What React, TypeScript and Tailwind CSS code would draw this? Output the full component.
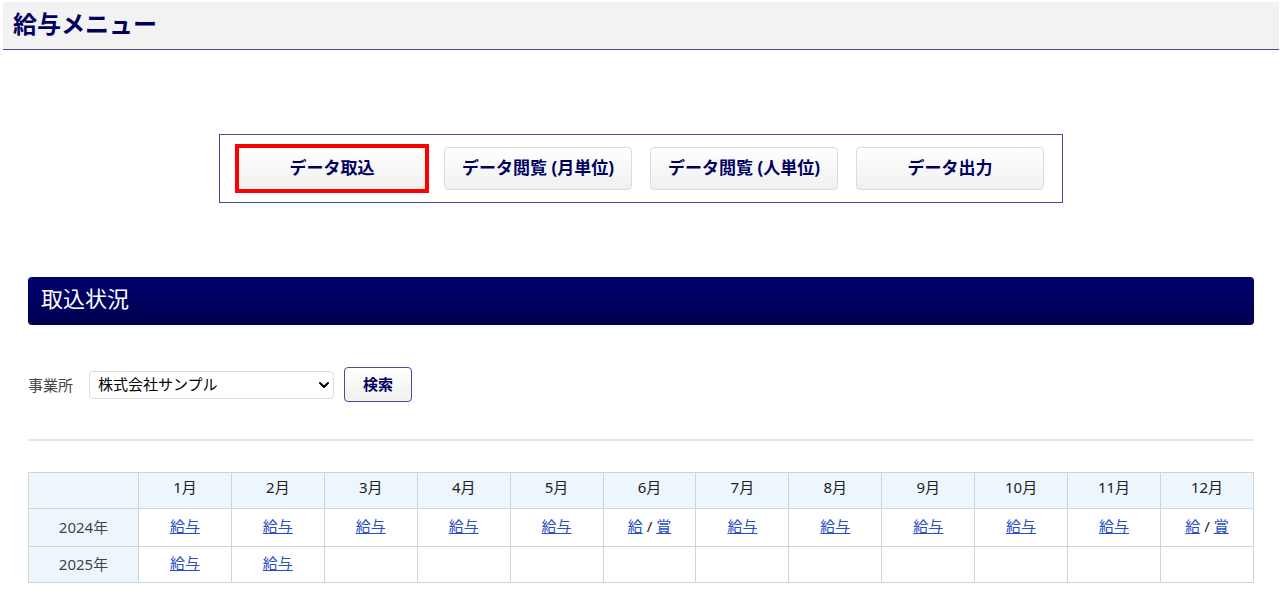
import React, { useState } from 'react';
import { ChevronDown } from 'lucide-react';

interface PayrollYear {
  year: number;
  months: string[][];
}

const menuItems = ['データ取込', 'データ閲覧 (月単位)', 'データ閲覧 (人単位)', 'データ出力'];

const monthLabels = Array.from({ length: 12 }, (_, i) => `${i + 1}月`);

const years: PayrollYear[] = [
  {
    year: 2024,
    months: [
      ['給与'], ['給与'], ['給与'], ['給与'], ['給与'], ['給', '賞'],
      ['給与'], ['給与'], ['給与'], ['給与'], ['給与'], ['給', '賞'],
    ],
  },
  {
    year: 2025,
    months: [['給与'], ['給与'], [], [], [], [], [], [], [], [], [], []],
  },
];

const MainMenu: React.FC = () => {
  const [active, setActive] = useState(0);

  return (
    <nav className="flex w-fit mx-auto mt-[84px] gap-[18px] border border-[#4b4b99] px-[18px] py-3">
      {menuItems.map((label, i) => (
        <button
          key={label}
          type="button"
          onClick={() => setActive(i)}
          className="relative w-[188px] h-[43px] pb-0.5 rounded border border-[#dcdcdc] bg-linear-to-b from-white to-[#f0f0f0] text-[17px] leading-6 font-bold text-[#00005f] whitespace-nowrap"
        >
          {label}
          {active === i && (
            <span className="absolute -inset-1 border-4 border-[#ff0000] pointer-events-none" />
          )}
        </button>
      ))}
    </nav>
  );
};

const SearchForm: React.FC = () => (
  <form className="flex items-center mt-[42px]" onSubmit={(e) => e.preventDefault()}>
    <label htmlFor="office" className="w-[61px] text-[#444444]">事業所</label>
    <div className="relative">
      <select
        id="office"
        className="block appearance-none w-[245px] h-7 pl-2 pr-6 pb-0.5 rounded border border-[#dcdcdc] bg-white text-black leading-5"
      >
        <option>株式会社サンプル</option>
      </select>
      <ChevronDown
        className="absolute right-0.5 top-1.5 w-4 h-4 text-black pointer-events-none"
        strokeWidth={3}
      />
    </div>
    <button
      type="submit"
      className="w-[68px] h-[35px] ml-[10px] pb-0.5 rounded border border-[#4b4b99] bg-linear-to-b from-white to-[#f0f0f0] font-bold text-[#00005f]"
    >
      検索
    </button>
  </form>
);

const StatusTable: React.FC = () => (
  <table className="w-full mt-[31px] table-fixed border-collapse text-center text-[#222222]">
    <thead>
      <tr className="h-9 bg-[#edf6fd]">
        <td className="w-[110px] border border-[#d3d3d3]" />
        {monthLabels.map((label) => (
          <th key={label} scope="col" className="border border-[#d3d3d3] pb-2 font-normal">
            {label}
          </th>
        ))}
      </tr>
    </thead>
    <tbody>
      {years.map((row) => (
        <tr key={row.year} className="h-[38px] last:h-9">
          <th scope="row" className="border border-[#d3d3d3] bg-[#edf6fd] pb-0.5 font-normal text-[#444444]">
            {row.year}年
          </th>
          {row.months.map((links, i) => (
            <td key={i} className="border border-[#d3d3d3] pb-1">
              {links.map((link, j) => (
                <React.Fragment key={link}>
                  {j > 0 && ' / '}
                  <a href="#" className="text-[#2a4fc4] underline">{link}</a>
                </React.Fragment>
              ))}
            </td>
          ))}
        </tr>
      ))}
    </tbody>
  </table>
);

export default function App() {
  return (
    <div className="bg-white pt-0.5 pl-[3px] pr-px pb-3 text-[15px] leading-5 font-['Noto_Sans','Noto_Sans_CJK_JP',sans-serif]">
      <header className="h-12 px-[10px] border-b border-[#4b4b99] bg-[#f2f2f2]">
        <h1 className="text-[24px] leading-[44px] font-bold text-[#00005f]">給与メニュー</h1>
      </header>

      <main className="px-[25px]">
        <MainMenu />

        <h2 className="h-12 mt-[74px] px-[13px] rounded bg-linear-to-b from-[#000070] to-[#000050] text-[22px] leading-[42px] text-white">
          取込状況
        </h2>

        <SearchForm />

        <hr className="mt-[37px] border-0 h-0.5 bg-[#e7e7e7]" />

        <StatusTable />
      </main>
    </div>
  );
}
